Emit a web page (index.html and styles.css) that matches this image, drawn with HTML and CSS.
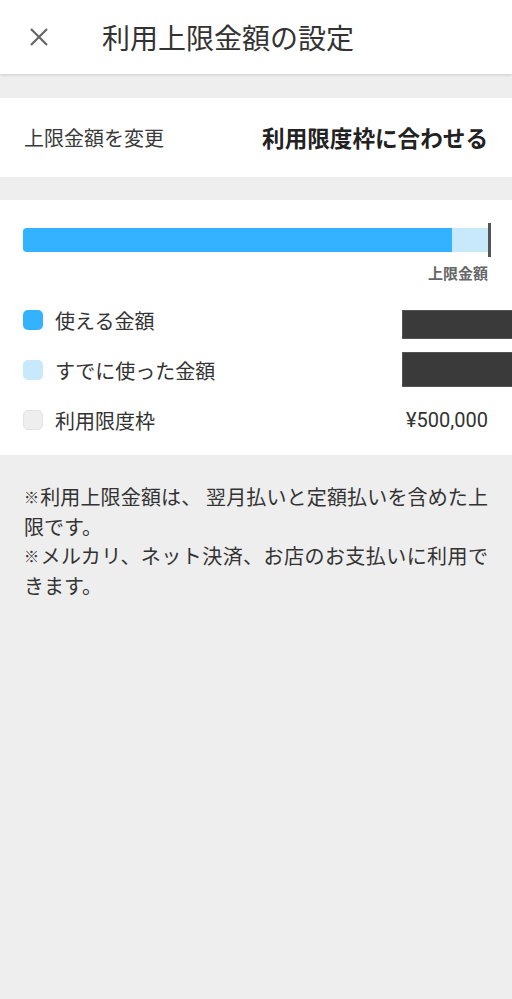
FILE: index.html
```html
<!DOCTYPE html>
<html lang="ja">
<head>
<meta charset="utf-8">
<title>利用上限金額の設定</title>
<link rel="stylesheet" href="styles.css">
</head>
<body>
<header class="appbar">
  <button class="close" aria-label="閉じる">
    <svg width="20" height="20" viewBox="0 0 20 20"><path d="M2 2 L18 18 M18 2 L2 18" stroke="#666" stroke-width="2.2" fill="none"/></svg>
  </button>
  <h1 class="title">利用上限金額の設定</h1>
</header>

<section class="card change-row">
  <span class="change-label">上限金額を変更</span>
  <span class="change-value">利用限度枠に合わせる</span>
</section>

<section class="card usage">
  <div class="meter">
    <div class="track"><div class="fill" style="width:92.3%"></div></div>
    <div class="marker"></div>
  </div>
  <div class="limit-label">上限金額</div>
  <ul class="legend">
    <li class="legend-row">
      <span class="swatch swatch-available"></span>
      <span class="legend-text">使える金額</span>
      <span class="redact"></span>
    </li>
    <li class="legend-row">
      <span class="swatch swatch-used"></span>
      <span class="legend-text">すでに使った金額</span>
      <span class="redact redact-tall"></span>
    </li>
    <li class="legend-row">
      <span class="swatch swatch-limit"></span>
      <span class="legend-text">利用限度枠</span>
      <span class="amount">¥500,000</span>
    </li>
  </ul>
</section>

<section class="notes">
  <p class="note"><span class="note-line"><span class="kome">※</span>利用上限金額は、 翌月払いと定額払いを含めた上</span>限です。</p>
  <p class="note"><span class="note-line"><span class="kome">※</span>メルカリ、ネット決済、お店のお支払いに利用で</span>きます。</p>
</section>
</body>
</html>
```

FILE: styles.css
```css
* { box-sizing: border-box; }

html, body {
  margin: 0;
  padding: 0;
  background: #eeeeee;
  font-family: Roboto, "Noto Sans CJK JP", "Noto Sans", sans-serif;
  color: #333;
}

.appbar {
  height: 74px;
  background: #fff;
  display: flex;
  align-items: center;
  box-shadow: 0 1px 3px rgba(0, 0, 0, 0.14);
  position: relative;
  z-index: 1;
}

.close {
  width: 40px;
  height: 40px;
  margin-left: 19px;
  padding: 0;
  border: 0;
  background: none;
  display: flex;
  align-items: center;
  justify-content: center;
}

.title {
  margin: 0 0 0 43px;
  font-size: 28px;
  font-weight: 400;
  color: #333;
  line-height: 1;
  font-family: "Noto Sans CJK JP", sans-serif;
}

.card {
  background: #fff;
}

.change-row {
  margin-top: 24px;
  height: 79px;
  padding: 0 24px;
  display: flex;
  align-items: center;
  justify-content: space-between;
}

.change-label {
  font-size: 20px;
  color: #3a3a3a;
}

.change-value {
  font-size: 22.6px;
  font-weight: 700;
  color: #222;
}

.usage {
  margin-top: 23px;
  padding: 28px 24px 10px 23px;
}

.meter {
  position: relative;
  height: 24px;
}

.track {
  height: 24px;
  background: #c8e8fc;
  border-radius: 4px 0 0 4px;
  overflow: hidden;
}

.fill {
  height: 100%;
  background: #33b3ff;
}

.marker {
  position: absolute;
  right: -3px;
  top: -5px;
  width: 3px;
  height: 34px;
  background: #555;
}

.limit-label {
  margin-top: 12px;
  text-align: right;
  font-size: 15px;
  line-height: 20px;
  font-weight: 700;
  color: #666;
}

.legend {
  list-style: none;
  margin: 11px 0 0;
  padding: 0;
}

.legend-row {
  height: 50px;
  display: flex;
  align-items: center;
}

.swatch {
  width: 20px;
  height: 20px;
  border-radius: 5px;
  flex: none;
}

.swatch-available { background: #33b3ff; }
.swatch-used { background: #c8e8fc; }
.swatch-limit { background: #eeeeee; border: 1px solid #e2e2e2; }

.legend-text {
  margin-left: 12px;
  font-size: 20px;
  color: #333;
  flex: 1;
}

.redact {
  width: 110px;
  height: 29px;
  margin-right: -24px;
  margin-top: 9px;
  background: #3a3a3a;
  border: 1px solid #555;
  border-right: 0;
}

.redact-tall {
  height: 35px;
  margin-top: -2px;
}

.amount {
  font-size: 20px;
  color: #333;
}

.notes {
  padding: 27px 24px 0 24px;
}

.note {
  margin: 0;
  font-size: 20px;
  line-height: 29.5px;
  color: #333;
  font-family: "Noto Sans CJK JP", sans-serif;
}

.note-line {
  display: block;
  white-space: nowrap;
  text-align: justify;
  text-align-last: justify;
}

.kome {
  display: inline-block;
  font-size: 15px;
  width: 16px;
  vertical-align: 2px;
}
```
